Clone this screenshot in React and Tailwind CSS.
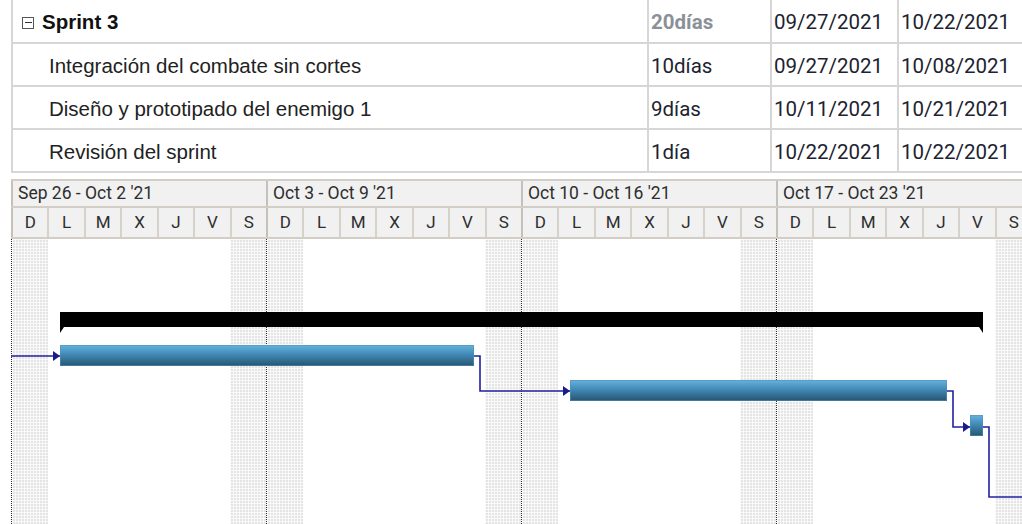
import React from 'react'

const tasks = [
  { name: 'Integración del combate sin cortes', duration: '10días', start: '09/27/2021', end: '10/08/2021' },
  { name: 'Diseño y prototipado del enemigo 1', duration: '9días', start: '10/11/2021', end: '10/21/2021' },
  { name: 'Revisión del sprint', duration: '1día', start: '10/22/2021', end: '10/22/2021' },
]

const weeks = ["Sep 26 - Oct 2 '21", "Oct 3 - Oct 9 '21", "Oct 10 - Oct 16 '21", "Oct 17 - Oct 23 '21"]
const days = ['D', 'L', 'M', 'X', 'J', 'V', 'S']

const shade =
  'bg-[#e4e4e4] bg-[linear-gradient(to_right,rgba(255,255,255,0.75)_1px,transparent_1px),linear-gradient(to_bottom,rgba(255,255,255,0.75)_1px,transparent_1px)] bg-[length:3px_3px]'

function Row({ children, first }) {
  return (
    <div className={`flex pt-[3px] border-b-2 border-[#d6d6d6] ${first ? 'h-[44px]' : 'h-[43px]'}`}>
      {children}
    </div>
  )
}

function Cells({ duration, start, end, summary }) {
  return (
    <>
      <div
        className={`w-[123px] border-l-2 border-[#d6d6d6] -mt-[3px] pt-[3px] pl-[2px] flex items-center font-['Roboto',sans-serif] text-[20.5px] ${
          summary ? 'font-bold text-[#8b9098]' : 'text-[#1d2330]'
        }`}
      >
        {duration}
      </div>
      <div className="w-[127px] border-l-2 border-[#d6d6d6] -mt-[3px] pt-[3px] pl-[2px] flex items-center font-['Roboto',sans-serif] text-[20.5px] text-[#1d2330]">
        {start}
      </div>
      <div className="flex-1 border-l-2 border-[#d6d6d6] -mt-[3px] pt-[3px] pl-[2px] flex items-center font-['Roboto',sans-serif] text-[20.5px] text-[#1d2330] whitespace-nowrap">
        {end}
      </div>
    </>
  )
}

function TaskTable() {
  return (
    <div className="ml-[11px] border-l-2 border-[#d6d6d6]">
      <Row first>
        <div className="w-[634px] pl-[9px] flex items-center gap-[8px]">
          <span className="w-[12px] h-[12px] border border-[#555] flex items-center justify-center">
            <span className="w-[7px] h-px bg-[#333]" />
          </span>
          <span className="font-['Liberation_Sans',Arial,sans-serif] font-bold text-[20.5px] text-[#111]">Sprint 3</span>
        </div>
        <Cells duration="20días" start="09/27/2021" end="10/22/2021" summary />
      </Row>
      {tasks.map((t) => (
        <Row key={t.name}>
          <div className="w-[634px] pl-[36px] flex items-center font-['Liberation_Sans',Arial,sans-serif] text-[20.5px] text-[#222]">
            {t.name}
          </div>
          <Cells duration={t.duration} start={t.start} end={t.end} />
        </Row>
      ))}
    </div>
  )
}

function TimelineHeader() {
  return (
    <div className="ml-[11px] font-['Roboto',sans-serif] text-[#2e2e2e]">
      <div className="flex h-[29px] border-t-2 border-b-2 border-[#d2cec6] bg-[#f1f1f1]">
        {weeks.map((w) => (
          <div key={w} className="w-[255px] shrink-0 border-l-2 border-[#c6c1b8] pl-[5px] flex items-center text-[17.5px] whitespace-nowrap">
            {w}
          </div>
        ))}
      </div>
      <div className="flex h-[31px] border-b-2 border-[#d2cec6] bg-[#f1f1f1]">
        {weeks.map((w) => (
          <div key={w} className="w-[255px] shrink-0 border-l-2 border-[#c6c1b8] flex">
            {days.map((d, i) => (
              <div
                key={d}
                className={`flex-1 flex items-center justify-center text-[17px] ${i > 0 ? 'border-l-2 border-[#d6d2ca]' : ''}`}
              >
                {d}
              </div>
            ))}
          </div>
        ))}
      </div>
    </div>
  )
}

function Bar({ x, y, w, h }) {
  return (
    <g>
      <rect x={x} y={y} width={w} height={h} fill="url(#barFill)" />
      <rect x={x + 0.5} y={y + 0.5} width={w - 1} height={h - 1} fill="none" stroke="#4f93bd" strokeOpacity="0.6" />
    </g>
  )
}

function Link({ points }) {
  const last = points[points.length - 1]
  return (
    <g>
      <polyline points={points.map((p) => p.join(',')).join(' ')} fill="none" stroke="#2020a0" strokeWidth="1.6" />
      {last.arrow !== false && (
        <polygon points={`${last[0]},${last[1]} ${last[0] - 7},${last[1] - 5} ${last[0] - 7},${last[1] + 5}`} fill="#1a1a8c" />
      )}
    </g>
  )
}

function GanttBody() {
  // y values are relative to the top of the chart body (page y 239)
  const top = 239
  const y = (v) => v - top
  const tail = [[983, y(427)], [989, y(427)], [989, y(497)], [1030, y(497)]]
  tail.arrow = false
  return (
    <div className="relative h-[285px]">
      <div className="flex ml-[11px] h-full">
        {weeks.map((w) => (
          <div key={w} className="w-[255px] shrink-0 border-l border-dotted border-[#2a2a2a] flex">
            {days.map((d, i) => (
              <div key={d} className={`flex-1 ${i === 0 || i === 6 ? shade : ''}`} />
            ))}
          </div>
        ))}
      </div>
      <svg className="absolute inset-0" width="1022" height="285" viewBox="0 0 1022 285">
        <defs>
          <linearGradient id="barFill" x1="0" y1="0" x2="0" y2="1">
            <stop offset="0" stopColor="#67b3de" />
            <stop offset="0.45" stopColor="#4189b6" />
            <stop offset="1" stopColor="#27546f" />
          </linearGradient>
        </defs>
        {/* sprint summary bracket */}
        <polygon
          points={`60,${y(312)} 983,${y(312)} 983,${y(333)} 979,${y(327)} 64,${y(327)} 60,${y(333)}`}
          fill="#000"
        />
        <Link points={[[11, y(356)], [60, y(356)]]} />
        <Bar x={60} y={y(345)} w={414} h={21} />
        <Link points={[[474, y(356)], [480, y(356)], [480, y(391)], [570, y(391)]]} />
        <Bar x={570} y={y(380)} w={377} h={21} />
        <Link points={[[947, y(391)], [953, y(391)], [953, y(427)], [970, y(427)]]} />
        <Bar x={970} y={y(415)} w={13} h={21} />
        <Link points={tail} />
      </svg>
    </div>
  )
}

export default function App() {
  return (
    <div className="w-[1022px] h-[524px] overflow-hidden bg-white">
      <TaskTable />
      <div className="h-[6px]" />
      <TimelineHeader />
      <GanttBody />
    </div>
  )
}
